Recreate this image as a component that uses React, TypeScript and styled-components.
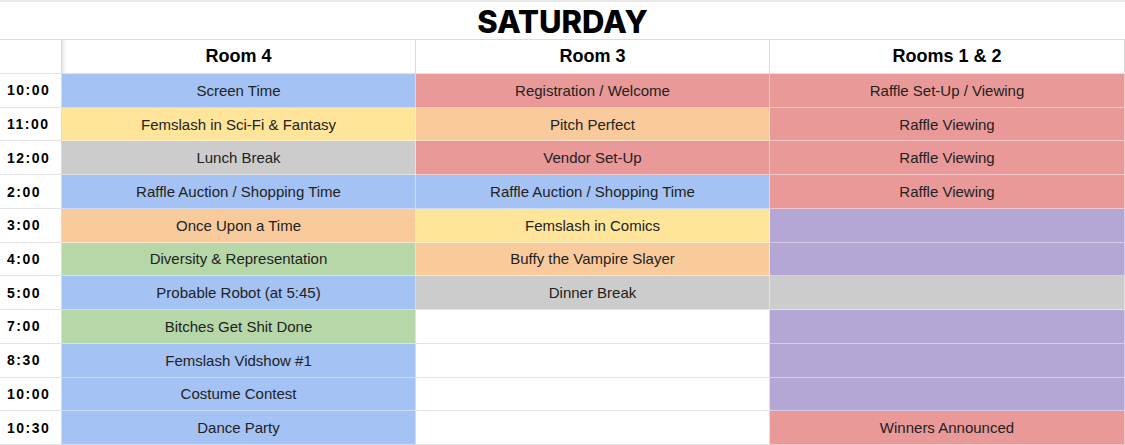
import styled, { createGlobalStyle } from "styled-components";

const GlobalStyle = createGlobalStyle`
  html, body {
    margin: 0;
    padding: 0;
    background: #fff;
  }
  body {
    font-family: "Liberation Sans", Arial, sans-serif;
  }
`;

const colors = {
  blue: "#a4c2f4",
  red: "#ea9999",
  yellow: "#ffe599",
  orange: "#f9cb9c",
  gray: "#cccccc",
  green: "#b6d7a8",
  purple: "#b4a7d6",
  white: "#ffffff",
};

type Tone = keyof typeof colors;
type Slot = [string, Tone];

const rooms = ["Room 4", "Room 3", "Rooms 1 & 2"];

const schedule: { time: string; slots: Slot[] }[] = [
  { time: "10:00", slots: [["Screen Time", "blue"], ["Registration / Welcome", "red"], ["Raffle Set-Up / Viewing", "red"]] },
  { time: "11:00", slots: [["Femslash in Sci-Fi & Fantasy", "yellow"], ["Pitch Perfect", "orange"], ["Raffle Viewing", "red"]] },
  { time: "12:00", slots: [["Lunch Break", "gray"], ["Vendor Set-Up", "red"], ["Raffle Viewing", "red"]] },
  { time: "2:00", slots: [["Raffle Auction / Shopping Time", "blue"], ["Raffle Auction / Shopping Time", "blue"], ["Raffle Viewing", "red"]] },
  { time: "3:00", slots: [["Once Upon a Time", "orange"], ["Femslash in Comics", "yellow"], ["", "purple"]] },
  { time: "4:00", slots: [["Diversity & Representation", "green"], ["Buffy the Vampire Slayer", "orange"], ["", "purple"]] },
  { time: "5:00", slots: [["Probable Robot (at 5:45)", "blue"], ["Dinner Break", "gray"], ["", "gray"]] },
  { time: "7:00", slots: [["Bitches Get Shit Done", "green"], ["", "white"], ["", "purple"]] },
  { time: "8:30", slots: [["Femslash Vidshow #1", "blue"], ["", "white"], ["", "purple"]] },
  { time: "10:00", slots: [["Costume Contest", "blue"], ["", "white"], ["", "purple"]] },
  { time: "10:30", slots: [["Dance Party", "blue"], ["", "white"], ["Winners Announced", "red"]] },
];

const App = () => {
  return (
    <>
      <GlobalStyle />
      <Sheet>
        <Title>SATURDAY</Title>
        <Corner />
        {rooms.map((r, i) => (
          <RoomHeader key={r} $first={i === 0}>
            {r}
          </RoomHeader>
        ))}
        {schedule.map((row, ri) => (
          <Row key={ri} time={row.time} slots={row.slots} />
        ))}
      </Sheet>
    </>
  );
};

const Row = ({ time, slots }: { time: string; slots: Slot[] }) => (
  <>
    <TimeCell>{time}</TimeCell>
    {slots.map(([label, tone], i) => (
      <Cell key={i} $tone={tone}>
        {label}
      </Cell>
    ))}
  </>
);

const Sheet = styled.div`
  display: grid;
  grid-template-columns: 62px 354px 354px 1fr;
  grid-template-rows: 38px 34px repeat(11, 1fr);
  width: 1125px;
  height: 443px;
  border-top: 2px solid #e9e9e9;
  overflow: hidden;
`;

const Title = styled.div`
  grid-column: 1 / -1;
  display: flex;
  align-items: center;
  justify-content: center;
  font-family: Inter, "Liberation Sans", sans-serif;
  font-weight: 800;
  font-size: 31px;
  color: #000;
  border-bottom: 1px solid #dadada;
  padding-top: 2px;
`;

const Corner = styled.div`
  border-right: 1px solid #dadada;
  border-bottom: 1px solid #e2e2e2;
`;

const RoomHeader = styled.div<{ $first?: boolean }>`
  display: flex;
  align-items: center;
  justify-content: center;
  font-weight: bold;
  font-size: 18px;
  color: #000;
  border-right: 1px solid #dadada;
  border-bottom: 1px solid #e2e2e2;
  box-shadow: ${(p) => (p.$first ? "inset 6px 0 6px -6px rgba(0, 0, 0, 0.18)" : "none")};
`;

const TimeCell = styled.div`
  display: flex;
  align-items: center;
  padding-left: 7px;
  font-weight: bold;
  font-size: 14px;
  letter-spacing: 1.5px;
  color: #000;
  border-right: 1px solid #dadada;
  border-bottom: 1px solid #e2e2e2;
`;

const Cell = styled.div<{ $tone: Tone }>`
  display: flex;
  align-items: center;
  justify-content: center;
  font-size: 15px;
  color: #222;
  background: ${(p) => colors[p.$tone]};
  border-right: 1px solid
    ${(p) => (p.$tone === "white" ? "#e2e2e2" : "rgba(255, 255, 255, 0.45)")};
  border-bottom: 1px solid
    ${(p) => (p.$tone === "white" ? "#e2e2e2" : "rgba(255, 255, 255, 0.45)")};
  white-space: nowrap;
`;

export default App;
